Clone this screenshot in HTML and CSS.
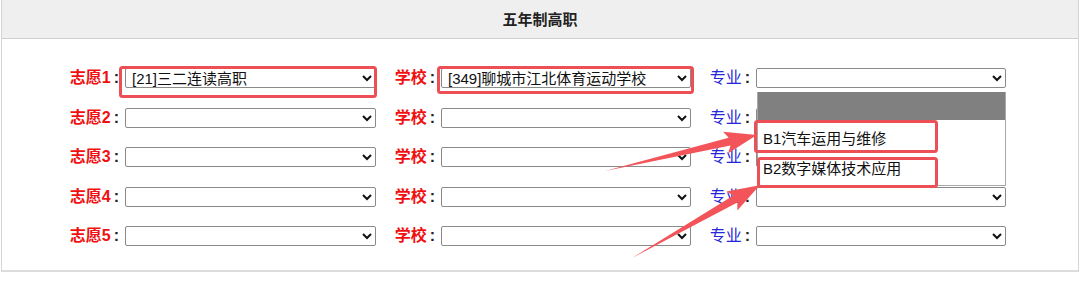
FILE: index.html
```html
<!DOCTYPE html>
<html lang="zh">
<head>
<meta charset="utf-8">
<title>五年制高职</title>
<link rel="stylesheet" href="styles.css">
</head>
<body>
<div class="panel">
  <div class="panel-head">五年制高职</div>
  <div class="panel-body">
    <div class="grid">
      <label class="lbl red">志愿1<span class="colon">:</span></label>
      <select class="sel"><option>[21]三二连读高职</option></select>
      <label class="lbl red">学校<span class="colon">:</span></label>
      <select class="sel"><option>[349]聊城市江北体育运动学校</option></select>
      <label class="lbl blue">专业<span class="colon">:</span></label>
      <select class="sel"><option></option></select>

      <label class="lbl red">志愿2<span class="colon">:</span></label>
      <select class="sel"><option></option></select>
      <label class="lbl red">学校<span class="colon">:</span></label>
      <select class="sel"><option></option></select>
      <label class="lbl blue">专业<span class="colon">:</span></label>
      <select class="sel"><option></option></select>

      <label class="lbl red">志愿3<span class="colon">:</span></label>
      <select class="sel"><option></option></select>
      <label class="lbl red">学校<span class="colon">:</span></label>
      <select class="sel"><option></option></select>
      <label class="lbl blue">专业<span class="colon">:</span></label>
      <select class="sel"><option></option></select>

      <label class="lbl red">志愿4<span class="colon">:</span></label>
      <select class="sel"><option></option></select>
      <label class="lbl red">学校<span class="colon">:</span></label>
      <select class="sel"><option></option></select>
      <label class="lbl blue">专业<span class="colon">:</span></label>
      <select class="sel"><option></option></select>

      <label class="lbl red">志愿5<span class="colon">:</span></label>
      <select class="sel"><option></option></select>
      <label class="lbl red">学校<span class="colon">:</span></label>
      <select class="sel"><option></option></select>
      <label class="lbl blue">专业<span class="colon">:</span></label>
      <select class="sel"><option></option></select>
    </div>
  </div>
</div>

<div class="dropdown">
  <div class="dd-hl"></div>
  <div class="dd-item">B1汽车运用与维修</div>
  <div class="dd-item">B2数字媒体技术应用</div>
</div>

<svg class="marks" width="1080" height="287" viewBox="0 0 1080 287">
  <g fill="none" stroke="#ec4f55" stroke-width="3">
    <rect x="120.5" y="67.5" width="255" height="29" rx="2"/>
    <rect x="438.5" y="67.5" width="254" height="25" rx="2"/>
    <rect x="755.5" y="121.5" width="181" height="30" rx="2"/>
    <rect x="758.5" y="158.5" width="178" height="28" rx="2"/>
  </g>
  <g fill="#f25459">
    <polygon transform="translate(605 171) rotate(-13.3)" points="0,0 128,-4 124,-11 156,0 124,11 128,4"/>
    <polygon transform="translate(632 258) rotate(-29.7)" points="0,0 119,-4 115,-11 147,0 115,11 119,4"/>
  </g>
</svg>
</body>
</html>
```

FILE: styles.css
```css
html, body {
  margin: 0;
  padding: 0;
  background: #ffffff;
}
body {
  width: 1080px;
  height: 287px;
  position: relative;
  overflow: hidden;
  font-family: "Liberation Sans", "Noto Sans CJK SC", sans-serif;
}
.panel {
  width: 1076px;
  margin-left: 1px;
  border: 1px solid #d4d4d4;
  border-top: none;
  border-bottom: 2px solid #dcdcdc;
}
.panel-head {
  height: 38px;
  line-height: 38px;
  background: #efefef;
  border-bottom: 1px solid #cfcfcf;
  text-align: center;
  font-family: "Noto Sans CJK SC", sans-serif;
  font-weight: bold;
  font-size: 15px;
  color: #222;
}
.panel-body {
  padding: 29px 0 24px 0;
}
.grid {
  display: grid;
  grid-template-columns: 123px 251px 65px 250px 65px 250px;
  grid-auto-rows: 20px;
  row-gap: 19.5px;
  align-items: center;
}
.lbl {
  text-align: right;
  padding-right: 6px;
  font-size: 16px;
  font-family: "Liberation Sans", "Noto Sans CJK SC", sans-serif;
  white-space: nowrap;
  line-height: 20px;
}
.red {
  color: #f01010;
  font-weight: bold;
}
.blue {
  color: #2626d9;
}
.colon {
  color: #222;
  font-weight: bold;
  margin-left: 3px;
}
.sel {
  width: 100%;
  height: 20px;
  box-sizing: border-box;
  border: 1px solid #8a8a8a;
  border-radius: 2px;
  background: #fff;
  font-family: "Liberation Sans", "Noto Sans CJK SC", sans-serif;
  font-size: 15px;
  color: #111;
  padding: 0 2px;
  margin: 0;
}
.dropdown {
  position: absolute;
  left: 757px;
  top: 92px;
  width: 249px;
  height: 94px;
  box-sizing: border-box;
  background: #fff;
  border: 1px solid #a8a8a8;
  border-top: none;
  font-family: "Liberation Sans", "Noto Sans CJK SC", sans-serif;
  font-size: 15px;
  color: #111;
}
.dd-hl {
  height: 28px;
  background: #808080;
}
.dd-item {
  height: 33px;
  line-height: 20px;
  padding: 9px 0 0 5px;
  box-sizing: border-box;
}
.dd-item + .dd-item {
  height: 32px;
  padding-top: 6px;
}
.marks {
  position: absolute;
  left: 0;
  top: 0;
  pointer-events: none;
}
```
